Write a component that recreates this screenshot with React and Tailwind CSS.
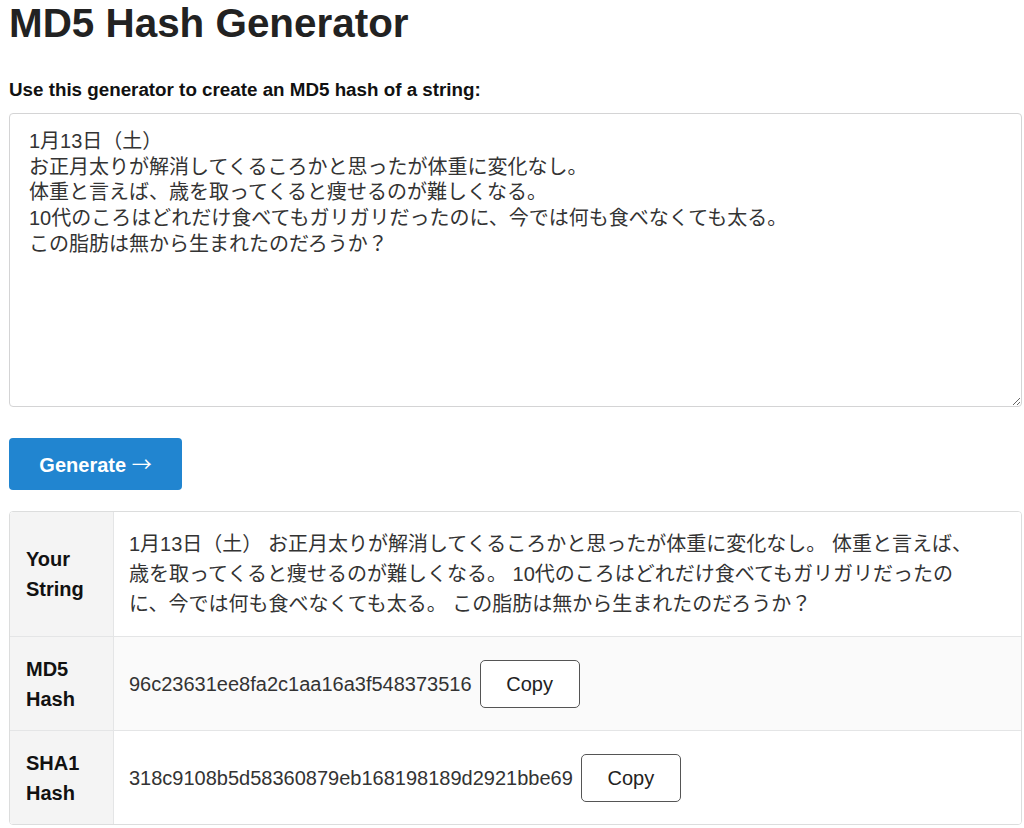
import { useState } from 'react';

const SOURCE = `1月13日（土）
お正月太りが解消してくるころかと思ったが体重に変化なし。
体重と言えば、歳を取ってくると痩せるのが難しくなる。
10代のころはどれだけ食べてもガリガリだったのに、今では何も食べなくても太る。
この脂肪は無から生まれたのだろうか？`;

const MD5 = '96c23631ee8fa2c1aa16a3f548373516';
const SHA1 = '318c9108b5d58360879eb168198189d2921bbe69';

function CopyButton() {
  return (
    <button className="ml-[8px] inline-flex h-[48px] w-[100px] items-center justify-center rounded-[5px] border border-[#555] bg-white align-middle text-[20px] text-[#222]">
      Copy
    </button>
  );
}

function Row({ label, children, striped, last, pad = 'py-[17px]' }) {
  return (
    <div className={`grid grid-cols-[104px_1fr] ${last ? '' : 'border-b border-[#e4e5e6]'} ${striped ? 'bg-[#fafafa]' : 'bg-white'}`}>
      <div className={`flex items-center border-r border-[#e4e5e6] bg-[#f4f4f4] px-[16px] ${pad} text-[20px] font-bold leading-[30px] text-[#111]`}>
        <div>{label}</div>
      </div>
      <div className={`flex items-center ${pad} pl-[15px] pr-[40px] text-[20px] leading-[30px] text-[#333]`}>
        <div>{children}</div>
      </div>
    </div>
  );
}

export default function App() {
  const [text, setText] = useState(SOURCE);
  const flat = SOURCE.split('\n').join(' ');

  return (
    <div className="min-h-screen bg-white pl-[9px] pr-[2px] font-['Liberation_Sans','Noto_Sans_CJK_JP',sans-serif] text-[#212121]">
      <h1 className="m-0 text-[40.4px] font-bold leading-[46px] text-[#222]">MD5 Hash Generator</h1>

      <label className="mt-[35px] block text-[18.8px] font-bold leading-[18px] text-[#111]">
        Use this generator to create an MD5 hash of a string:
      </label>

      <textarea
        value={text}
        onChange={(e) => setText(e.target.value)}
        className="mt-[14px] block h-[294px] w-full resize-y rounded-[4px] border border-[#d4d4d5] px-[19px] py-[15px] text-[20px] leading-[25.7px] text-[#333] outline-none"
      />

      <button className="mt-[31px] block h-[52px] w-[173px] rounded-[4px] bg-[#2185d0] text-[20px] font-bold text-white">
        Generate <span className="font-['Noto_Sans_CJK_JP',sans-serif] font-normal">→</span>
      </button>

      {/* Results */}
      <div className="mt-[21px] overflow-hidden rounded-[4px] border border-[#dcdddd]">
        <Row label={<>Your<br />String</>}>{flat}</Row>
        <Row label={<>MD5<br />Hash</>} striped pad="py-[16.5px]">
          <span className="align-middle">{MD5}</span>
          <CopyButton />
        </Row>
        <Row label={<>SHA1<br />Hash</>} last pad="py-[16.5px]">
          <span className="align-middle">{SHA1}</span>
          <CopyButton />
        </Row>
      </div>
    </div>
  );
}
